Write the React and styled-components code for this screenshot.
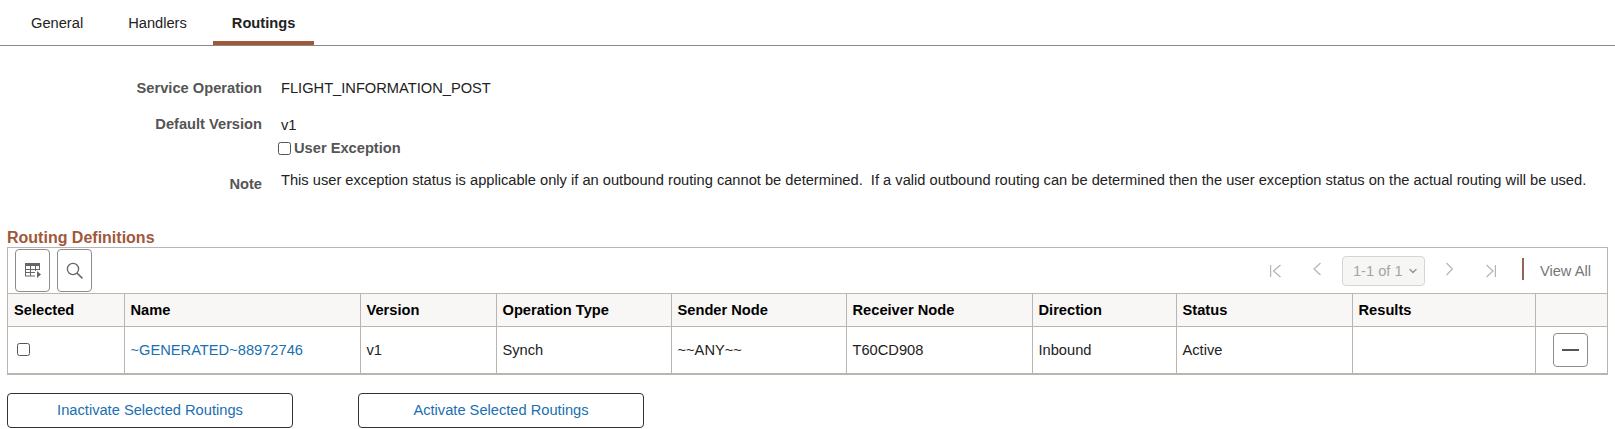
import styled, { createGlobalStyle } from "styled-components";
import { ChevronDown } from "lucide-react";

const GlobalStyle = createGlobalStyle`
  html, body {
    margin: 0;
    padding: 0;
    background: #fff;
    font-family: "Liberation Sans", Arial, sans-serif;
    font-size: 14.67px;
    color: #222;
  }
`;

const Page = styled.div`
  width: 1615px;
  height: 429px;
  overflow: hidden;
`;

const Tabs = styled.div`
  display: flex;
  gap: 7px;
  height: 45px;
  padding-left: 12px;
  border-bottom: 1px solid #8a8a8a;
`;

const Tab = styled.div`
  box-sizing: border-box;
  height: 45px;
  padding: 15px 19px 0;
  border-bottom: ${(p) => (p.$active ? "4px solid #a0583a" : "none")};
  font-weight: ${(p) => (p.$active ? 700 : 400)};
  line-height: 17px;
`;

const Form = styled.div`
  display: grid;
  grid-template-columns: 262px 1fr;
  column-gap: 19px;
  padding-top: 33px;
`;

const Label = styled.div`
  text-align: right;
  font-weight: 700;
  color: #555;
  line-height: 18px;
  margin-top: ${(p) => p.$top || 0}px;
  margin-bottom: ${(p) => p.$gap || 0}px;
`;

const Value = styled.div`
  line-height: 18px;
  margin-top: ${(p) => p.$top || 0}px;
  margin-bottom: ${(p) => p.$gap || 0}px;
`;

const CheckLine = styled.label`
  display: flex;
  align-items: center;
  gap: 3px;
  margin-left: -3px;
  margin-bottom: 14px;
  font-weight: 700;
  color: #555;
  line-height: 18px;
`;

const Box = styled.span`
  display: inline-block;
  box-sizing: border-box;
  width: 13px;
  height: 13px;
  border: 1px solid #555;
  border-radius: 2.5px;
  background: #fff;
`;

const Section = styled.div`
  margin: 0 7px;
`;

const SectionTitle = styled.div`
  margin-top: 36px;
  font-size: 16px;
  font-weight: 700;
  line-height: 18px;
  color: #a0583a;
`;

const Grid = styled.div`
  border: 1px solid #bab5ae;
  border-bottom-width: 2px;
`;

const Toolbar = styled.div`
  display: flex;
  align-items: center;
  height: 45px;
  padding-left: 7px;
  gap: 7px;
`;

const ToolButton = styled.div`
  display: flex;
  align-items: center;
  justify-content: center;
  box-sizing: border-box;
  width: 35px;
  height: 43px;
  border: 1px solid #8c8c8c;
  border-radius: 4px;
  color: #666;
`;

const Pager = styled.div`
  margin-left: auto;
  display: flex;
  align-items: center;
`;

const NavIcon = styled.svg`
  width: ${(p) => p.$w}px;
  height: 14px;
  margin-left: ${(p) => p.$left || 0}px;
  margin-top: ${(p) => p.$lift || 0}px;
  fill: none;
  stroke: #b4b4b4;
  stroke-width: 1.2;
`;

const PageSelect = styled.div`
  display: flex;
  align-items: center;
  justify-content: space-between;
  box-sizing: border-box;
  width: 83px;
  height: 30px;
  margin-left: 21px;
  padding: 0 5px 0 10px;
  border: 1px solid #d5d5d5;
  border-radius: 4px;
  background: #f6f6f5;
  color: #a5a5a5;
`;

const Divider = styled.div`
  width: 2px;
  height: 22px;
  margin-left: 26px;
  margin-top: -3px;
  background: #96654f;
`;

const ViewAll = styled.div`
  margin: 0 16px;
  color: #777;
`;

const Table = styled.table`
  width: 100%;
  border-collapse: collapse;
  table-layout: fixed;
`;

const Col = styled.col`
  width: ${(p) => p.$w}px;
`;

const Th = styled.th`
  box-sizing: border-box;
  height: 33px;
  padding: 0 6px;
  background: #f9f7f5;
  border: 1px solid #bab5ae;
  text-align: left;
  font-weight: 700;
  color: #000;
  &:first-child { border-left: none; }
  &:last-child { border-right: none; }
`;

const Td = styled.td`
  box-sizing: border-box;
  height: 46px;
  padding: 0 6px;
  border-left: 1px solid #bab5ae;
  border-right: 1px solid #bab5ae;
  &:first-child { border-left: none; }
  &:last-child { border-right: none; }
`;

const RowBox = styled(Box)`
  display: block;
  margin-left: 3px;
`;

const Link = styled.span`
  color: #1a6fb0;
`;

const MinusButton = styled.div`
  display: flex;
  align-items: center;
  justify-content: center;
  box-sizing: border-box;
  width: 35px;
  height: 34px;
  margin-left: 11px;
  border: 1px solid #8c8c8c;
  border-radius: 4px;
  &::before {
    content: "";
    width: 17px;
    height: 2px;
    background: #555;
  }
`;

const Actions = styled.div`
  display: flex;
  gap: 65px;
  margin-top: 18px;
`;

const ActionButton = styled.div`
  display: flex;
  align-items: center;
  justify-content: center;
  box-sizing: border-box;
  width: 286px;
  height: 35px;
  border: 1px solid #333;
  border-radius: 4px;
  color: #1a6fb0;
`;

const columns = [
  { title: "Selected", width: 116 },
  { title: "Name", width: 236 },
  { title: "Version", width: 136 },
  { title: "Operation Type", width: 175 },
  { title: "Sender Node", width: 175 },
  { title: "Receiver Node", width: 186 },
  { title: "Direction", width: 144 },
  { title: "Status", width: 176 },
  { title: "Results", width: 183 },
  { title: "", width: 72 },
];

const GridIcon = () => (
  <svg width="16" height="15" viewBox="0 0 16 15">
    <path d="M0 0h15v3H0z" fill="#666" />
    <path d="M.5 3v10M5.5 3v10M10.5 3v5M0 6.5h15M0 9.5h10M0 13h10M14.5 3v4" stroke="#666" fill="none" />
    <path d="M12 8l4 3.5-4 3.5z" fill="#666" />
  </svg>
);

const SearchIcon = () => (
  <svg width="17" height="17" viewBox="0 0 17 17" fill="none" stroke="#666" strokeWidth="1.3">
    <circle cx="7" cy="7" r="5.6" />
    <path d="M11 11l5.4 5.4" strokeWidth="1.6" />
  </svg>
);

export default function App() {
  return (
    <Page>
      <GlobalStyle />
      <Tabs>
        <Tab>General</Tab>
        <Tab>Handlers</Tab>
        <Tab $active>Routings</Tab>
      </Tabs>
      <Form>
        <Label $gap={18}>Service Operation</Label>
        <Value $gap={18}>FLIGHT_INFORMATION_POST</Value>
        <Label>Default Version</Label>
        <div>
          <Value $top={1} $gap={5}>v1</Value>
          <CheckLine>
            <Box />
            User Exception
          </CheckLine>
        </div>
        <Label $top={4}>Note</Label>
        <Value>
          This user exception status is applicable only if an outbound routing cannot be determined.&nbsp; If a valid outbound routing can be determined then the user exception status on the actual routing will be used.
        </Value>
      </Form>
      <Section>
        <SectionTitle>Routing Definitions</SectionTitle>
        <Grid>
          <Toolbar>
            <ToolButton><GridIcon /></ToolButton>
            <ToolButton><SearchIcon /></ToolButton>
            <Pager>
              <NavIcon viewBox="0 0 11 14" $w={11}><path d="M.6 1v12M10.5 1L3.5 7l7 6" /></NavIcon>
              <NavIcon viewBox="0 0 8 14" $w={8} $left={32} $lift={-4}><path d="M7.5 1L1 7l6.5 6" /></NavIcon>
              <PageSelect>1-1 of 1<ChevronDown size={12} strokeWidth={3} color="#999" /></PageSelect>
              <NavIcon viewBox="0 0 7 14" $w={7} $left={21} $lift={-4}><path d="M.5 1L6.5 7l-6 6" /></NavIcon>
              <NavIcon viewBox="0 0 10 14" $w={10} $left={33}><path d="M.5 1l6.5 6-6.5 6M9.4 1v12" /></NavIcon>
              <Divider />
              <ViewAll>View All</ViewAll>
            </Pager>
          </Toolbar>
          <Table>
            <colgroup>
              {columns.map((c) => (
                <Col key={c.title} $w={c.width} />
              ))}
            </colgroup>
            <thead>
              <tr>
                {columns.map((c) => (
                  <Th key={c.title}>{c.title}</Th>
                ))}
              </tr>
            </thead>
            <tbody>
              <tr>
                <Td><RowBox /></Td>
                <Td><Link>~GENERATED~88972746</Link></Td>
                <Td>v1</Td>
                <Td>Synch</Td>
                <Td>~~ANY~~</Td>
                <Td>T60CD908</Td>
                <Td>Inbound</Td>
                <Td>Active</Td>
                <Td></Td>
                <Td><MinusButton /></Td>
              </tr>
            </tbody>
          </Table>
        </Grid>
        <Actions>
          <ActionButton>Inactivate Selected Routings</ActionButton>
          <ActionButton>Activate Selected Routings</ActionButton>
        </Actions>
      </Section>
    </Page>
  );
}
